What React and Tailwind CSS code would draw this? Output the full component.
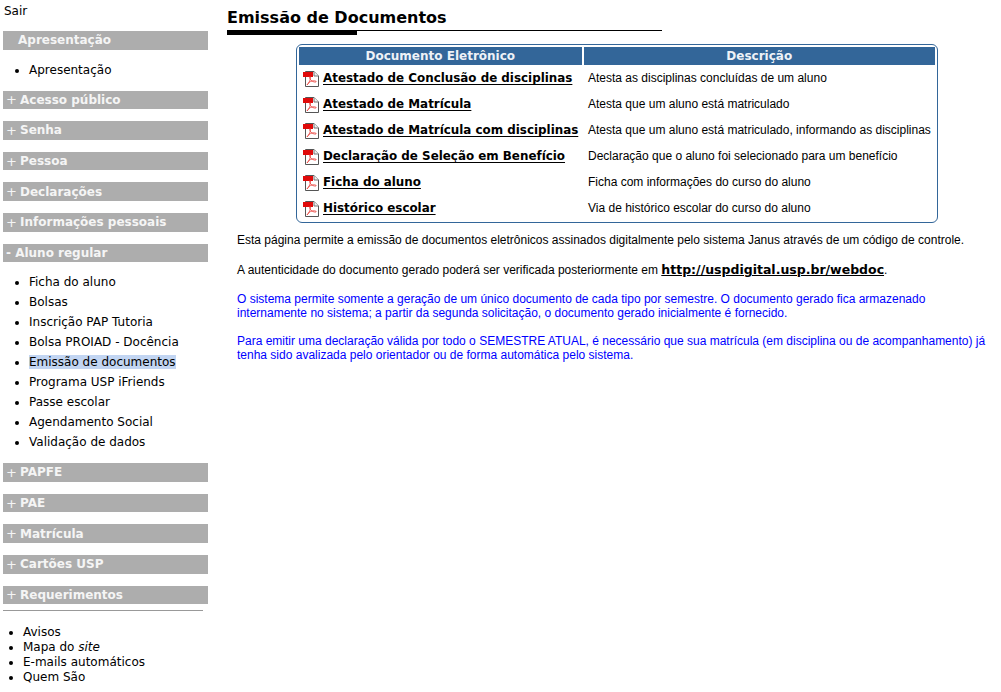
import React from "react";

const sans = "font-['DejaVu_Sans',Verdana,sans-serif]";

function PdfIcon() {
  return (
    <svg width="16" height="16" viewBox="0 0 16 16" className="shrink-0">
      <path d="M2.5 0.5H11L15.5 5V15.5H2.5Z" fill="#fff" stroke="#555" />
      <path d="M11 0.5V5H15.5" fill="#eee" stroke="#777" />
      <rect x="0" y="1" width="10" height="5" fill="#e00a0a" />
      <path
        d="M4 14C6 12 8 8 7.500 6C7 4.500 6 6 7 8C8 10 11 11.500 13 11C14 10 11 9.500 9 10C7 10.500 5 12 4 14Z"
        fill="none"
        stroke="#e8403a"
        strokeWidth="0.8"
      />
    </svg>
  );
}

function Bar({ children }) {
  return (
    <div className="h-[18.6px] bg-[#adadad] pl-[3px] mb-[12px] flex items-center whitespace-nowrap text-[12px] leading-none text-[#f5f5f5]">
      <span className="font-normal w-[14px] text-[13px]">+</span>
      <b className="font-bold">{children}</b>
    </div>
  );
}

// open sections have no plus sign, so their title sits a little further left
function OpenBar({ children }) {
  return (
    <div className="h-[18.6px] bg-[#adadad] pl-[3px] flex items-center whitespace-nowrap text-[12px] leading-none font-bold text-[#f5f5f5]">
      {children}
    </div>
  );
}

function SideList({ items }) {
  return (
    <ul className="list-disc pl-[26px] pt-[10px] mb-[11px] text-[12px] leading-[20px] text-black">
      {items.map((it) => (
        <li key={it}>
          {it === "Emissão de documentos" ? <span className="bg-[#c2d5f2]">{it}</span> : it}
        </li>
      ))}
    </ul>
  );
}

const docs = [
  ["Atestado de Conclusão de disciplinas", "Atesta as disciplinas concluídas de um aluno"],
  ["Atestado de Matrícula", "Atesta que um aluno está matriculado"],
  ["Atestado de Matrícula com disciplinas", "Atesta que um aluno está matriculado, informando as disciplinas"],
  ["Declaração de Seleção em Benefício", "Declaração que o aluno foi selecionado para um benefício"],
  ["Ficha do aluno", "Ficha com informações do curso do aluno"],
  ["Histórico escolar", "Via de histórico escolar do curso do aluno"],
];

export default function App() {
  return (
    <div className={`${sans} flex w-[1001px] h-[692px] overflow-hidden bg-white text-black`}>
      <aside className="w-[205px] ml-[3px] shrink-0">
        <div className="h-[31px] ml-[1px] pt-[3px] text-[12px] leading-[17px]">Sair</div>
        <OpenBar>
          <span className="w-[12px]" />
          Apresentação
        </OpenBar>
        <SideList items={["Apresentação"]} />
        <Bar>Acesso público</Bar>
        <Bar>Senha</Bar>
        <Bar>Pessoa</Bar>
        <Bar>Declarações</Bar>
        <Bar>Informações pessoais</Bar>
        <OpenBar>- Aluno regular</OpenBar>
        <SideList
          items={[
            "Ficha do aluno",
            "Bolsas",
            "Inscrição PAP Tutoria",
            "Bolsa PROIAD - Docência",
            "Emissão de documentos",
            "Programa USP iFriends",
            "Passe escolar",
            "Agendamento Social",
            "Validação de dados",
          ]}
        />
        <Bar>PAPFE</Bar>
        <Bar>PAE</Bar>
        <Bar>Matrícula</Bar>
        <Bar>Cartões USP</Bar>
        <Bar>Requerimentos</Bar>
        <div className="-mt-[6px] w-[200px] h-[1px] bg-[#999]" />
        <ul className="list-disc pl-[20px] pt-[14px] text-[12px] leading-[15px]">
          <li>Avisos</li>
          <li>
            Mapa do <i>site</i>
          </li>
          <li>E-mails automáticos</li>
          <li>Quem São</li>
        </ul>
      </aside>

      <main className="ml-[19px] flex-1">
        <h1 className="pt-[8px] h-[30px] text-[16px] leading-[20px] font-bold whitespace-nowrap">
          Emissão de Documentos
        </h1>
        <div className="w-[435px] h-[1px] bg-black" />
        <div className="w-[130px] h-[4px] bg-black" />

        <div className="ml-[69px] mt-[9px] w-[642px] h-[179px] border border-[#336699] rounded-[6px] px-[2px] pt-[2px]">
          <div className="flex gap-[2px] h-[17.500px] text-[12px] leading-none font-bold text-[#eef2f7]">
            <div className="w-[283px] bg-[#336699] flex items-center justify-center">Documento Eletrônico</div>
            <div className="w-[352px] bg-[#336699] flex items-center justify-center">Descrição</div>
          </div>
          {docs.map(([name, desc]) => (
            <div key={name} className="flex items-center h-[26px] relative top-[1px]">
              <div className="w-[285px] pl-[4px] flex items-center gap-[4px] whitespace-nowrap">
                <PdfIcon />
                <a className="mt-[1px] text-[11.900px] leading-none font-bold underline underline-offset-2 text-black">{name}</a>
              </div>
              <div className="pl-[4px] pb-[1px] font-['Liberation_Sans',Arial,sans-serif] text-[12px] whitespace-nowrap">{desc}</div>
            </div>
          ))}
        </div>

        <div className="ml-[10px] mt-[10px] w-[752px] font-['Liberation_Sans',Arial,sans-serif] text-[12px] leading-[14px]">
          <p>
            Esta página permite a emissão de documentos eletrônicos assinados digitalmente pelo sistema Janus através de um código de controle.
          </p>
          <p className="mt-[14px] h-[16px] flex items-end">
            <span>
              A autenticidade do documento gerado poderá ser verificada posteriormente em{" "}
              <a className={`${sans} font-bold text-[12.500px] underline`}>http://uspdigital.usp.br/webdoc</a>.
            </span>
          </p>
          <p className="mt-[15px] text-[#0000ff]">
            O sistema permite somente a geração de um único documento de cada tipo por semestre. O documento gerado fica armazenado
            <br />
            internamente no sistema; a partir da segunda solicitação, o documento gerado inicialmente é fornecido.
          </p>
          <p className="mt-[14px] text-[#0000ff]">
            Para emitir uma declaração válida por todo o SEMESTRE ATUAL, é necessário que sua matrícula (em disciplina ou de acompanhamento) já
            <br />
            tenha sido avalizada pelo orientador ou de forma automática pelo sistema.
          </p>
        </div>
      </main>
    </div>
  );
}
